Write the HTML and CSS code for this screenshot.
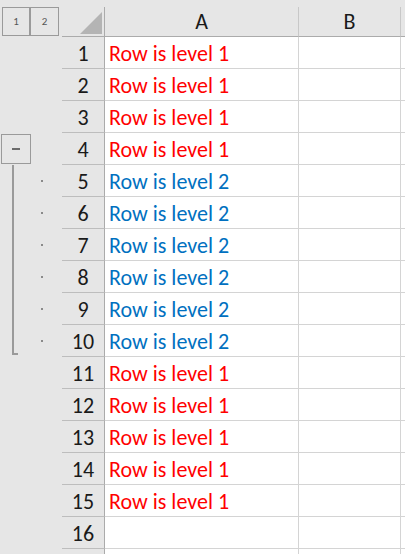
FILE: index.html
```html
<!DOCTYPE html>
<html>
<head>
<meta charset="utf-8">
<link rel="stylesheet" href="styles.css">
</head>
<body>
<div class="sheet">
  <div class="ol-head"><span class="lvl-btn">1</span><span class="lvl-btn b2">2</span></div>
  <div class="corner"><span class="tri"></span></div>
  <div class="colhead">A</div>
  <div class="colhead">B</div>
  <div class="colhead"></div>

  <div class="ol"></div><div class="rn">1</div><div class="cell l1">Row is level 1</div><div class="cell"></div><div class="cell"></div>
  <div class="ol"></div><div class="rn">2</div><div class="cell l1">Row is level 1</div><div class="cell"></div><div class="cell"></div>
  <div class="ol"></div><div class="rn">3</div><div class="cell l1">Row is level 1</div><div class="cell"></div><div class="cell"></div>
  <div class="ol"><span class="minus"><span class="bar"></span></span></div><div class="rn">4</div><div class="cell l1">Row is level 1</div><div class="cell"></div><div class="cell"></div>
  <div class="ol g"></div><div class="rn">5</div><div class="cell l2">Row is level 2</div><div class="cell"></div><div class="cell"></div>
  <div class="ol g"></div><div class="rn">6</div><div class="cell l2">Row is level 2</div><div class="cell"></div><div class="cell"></div>
  <div class="ol g"></div><div class="rn">7</div><div class="cell l2">Row is level 2</div><div class="cell"></div><div class="cell"></div>
  <div class="ol g"></div><div class="rn">8</div><div class="cell l2">Row is level 2</div><div class="cell"></div><div class="cell"></div>
  <div class="ol g"></div><div class="rn">9</div><div class="cell l2">Row is level 2</div><div class="cell"></div><div class="cell"></div>
  <div class="ol gend"></div><div class="rn">10</div><div class="cell l2">Row is level 2</div><div class="cell"></div><div class="cell"></div>
  <div class="ol"></div><div class="rn">11</div><div class="cell l1">Row is level 1</div><div class="cell"></div><div class="cell"></div>
  <div class="ol"></div><div class="rn">12</div><div class="cell l1">Row is level 1</div><div class="cell"></div><div class="cell"></div>
  <div class="ol"></div><div class="rn">13</div><div class="cell l1">Row is level 1</div><div class="cell"></div><div class="cell"></div>
  <div class="ol"></div><div class="rn">14</div><div class="cell l1">Row is level 1</div><div class="cell"></div><div class="cell"></div>
  <div class="ol"></div><div class="rn">15</div><div class="cell l1">Row is level 1</div><div class="cell"></div><div class="cell"></div>
  <div class="ol"></div><div class="rn">16</div><div class="cell"></div><div class="cell"></div><div class="cell"></div>
  <div class="ol"></div><div class="rn"></div><div class="cell"></div><div class="cell"></div><div class="cell"></div>
</div>
</body>
</html>
```
FILE: styles.css
```css
html, body {
  margin: 0;
  padding: 0;
  background: #e6e6e6;
  overflow: hidden;
}
.sheet {
  display: grid;
  grid-template-columns: 62px 43px 194px 102px 1fr;
  grid-template-rows: 37px repeat(17, 32px);
  width: 405px;
  font-family: Carlito, "Liberation Sans", sans-serif;
  font-size: 22px;
  color: #1a1a1a;
}
.ol-head {
  display: flex;
  padding: 7px 0 0 2px;
}
.lvl-btn {
  box-sizing: border-box;
  width: 28px;
  height: 29px;
  border: 1px solid #9a9a9a;
  font-size: 11px;
  color: #555;
  display: flex;
  align-items: center;
  justify-content: center;
}
.lvl-btn.b2 { width: 29px; }
.corner {
  margin-top: 7px;
  border-right: 1px solid #ababab;
  border-bottom: 1px solid #ababab;
  display: flex;
  align-items: flex-end;
  justify-content: flex-end;
  padding: 0 2px 2px 0;
}
.tri {
  width: 22px;
  height: 22px;
  background: #b4b4b4;
  clip-path: polygon(100% 0, 100% 100%, 0 100%);
}
.colhead {
  margin-top: 7px;
  border-right: 1px solid #c8c8c8;
  border-bottom: 1px solid #ababab;
  display: flex;
  align-items: center;
  justify-content: center;
  padding-bottom: 1px;
}
.ol {
  box-sizing: border-box;
}
.ol .minus {
  box-sizing: border-box;
  display: flex;
  align-items: center;
  justify-content: center;
  width: 30px;
  height: 30px;
  margin: 1px 0 0 1px;
  border: 1px solid #9a9a9a;
}
.ol .bar {
  width: 8px;
  height: 2px;
  background: #6b6b6b;
}
.ol.g {
  background:
    linear-gradient(#9a9a9a, #9a9a9a) 12px 0 / 2px 100% no-repeat,
    linear-gradient(#8a8a8a, #8a8a8a) 41px 15px / 2px 2px no-repeat;
}
.ol.gend {
  background:
    linear-gradient(#9a9a9a, #9a9a9a) 12px 0 / 2px 30px no-repeat,
    linear-gradient(#9a9a9a, #9a9a9a) 12px 28px / 6px 2px no-repeat,
    linear-gradient(#8a8a8a, #8a8a8a) 41px 15px / 2px 2px no-repeat;
}
.rn {
  border-right: 1px solid #ababab;
  border-bottom: 1px solid #bdbdbd;
  display: flex;
  align-items: center;
  justify-content: center;
  padding-top: 1px;
}
.cell {
  background: #fff;
  border-right: 1px solid #d4d4d4;
  border-bottom: 1px solid #d4d4d4;
  display: flex;
  align-items: center;
  padding: 1px 0 0 4px;
  white-space: nowrap;
}
.l1 { color: #ff0000; }
.l2 { color: #0070c0; }
```
